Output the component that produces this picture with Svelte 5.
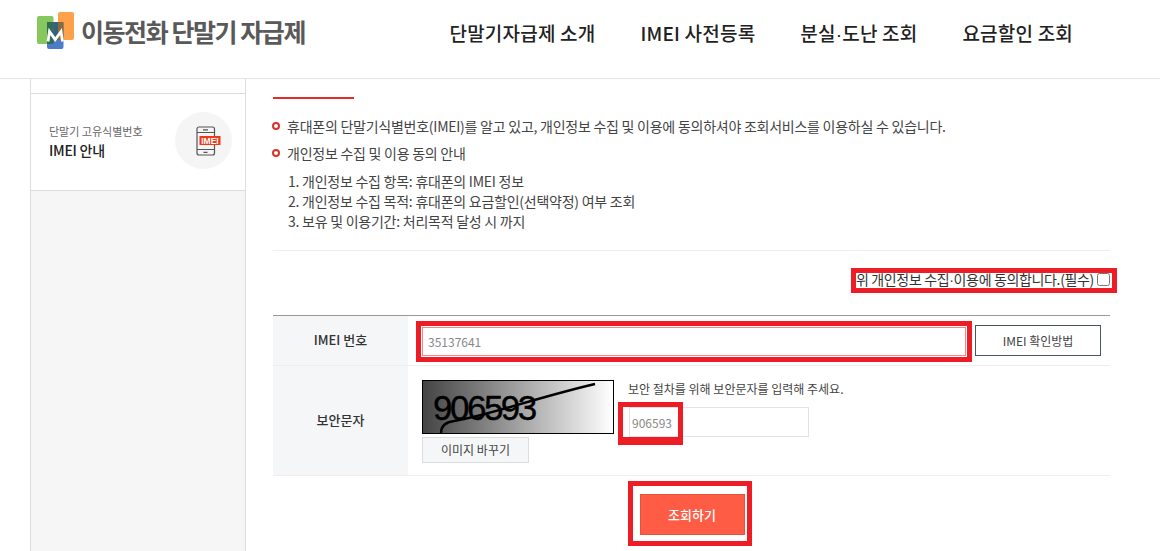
<script>
	const notices = [
		'휴대폰의 단말기식별번호(IMEI)를 알고 있고, 개인정보 수집 및 이용에 동의하셔야 조회서비스를 이용하실 수 있습니다.',
		'개인정보 수집 및 이용 동의 안내'
	];
	const terms = [
		'1. 개인정보 수집 항목: 휴대폰의 IMEI 정보',
		'2. 개인정보 수집 목적: 휴대폰의 요금할인(선택약정) 여부 조회',
		'3. 보유 및 이용기간: 처리목적 달성 시 까지'
	];
</script>

<div class="page">
	<header class="site-header">
		<a class="logo" href="#top">
			<svg class="logo-mark" width="42" height="38" viewBox="0 0 42 38">
				<rect x="1" y="4" width="16.500" height="28" rx="2" fill="#86c85e" />
				<rect x="22" y="0" width="16" height="28" rx="2" fill="#ffa04a" />
				<rect x="11" y="10" width="16.500" height="27" rx="2" fill="#4a7cc8" />
				<path d="M11 10h6.500v22h-6.500z" fill="#2f6e55" />
				<path d="M17.500 10h4.500v18h-4.500z" fill="#3a5f7a" />
				<path d="M22 10h5.500v18h-5.500z" fill="#8a6a3c" />
				<path d="M12 29.500 L13.500 19.500 L19.200 27.500 L25 19.500 L26.500 29.500" fill="none" stroke="#fff" stroke-width="2.800" />
			</svg>
			<span class="logo-text">이동전화 단말기 자급제</span>
		</a>
		<nav class="main-nav">
			<a href="#top">단말기자급제 소개</a>
			<a href="#top">IMEI 사전등록</a>
			<a href="#top">분실<span class="dot">·</span>도난 조회</a>
			<a href="#top">요금할인 조회</a>
		</nav>
	</header>

	<div class="layout">
		<aside class="sidebar">
			<div class="side-top"></div>
			<div class="side-item">
				<div class="side-label">
					<span class="side-sub">단말기 고유식별번호</span>
					<strong>IMEI 안내</strong>
				</div>
				<div class="side-icon">
					<svg width="34" height="30" viewBox="0 0 34 30">
						<rect x="10" y="1" width="17.500" height="28" rx="2" fill="#f5f5f5" stroke="#555" stroke-width="1.200" />
						<path d="M10 6.500h17.500M10 23.500h17.500M16 3.800h5M16.500 26.300h4" stroke="#555" stroke-width="1.200" fill="none" />
						<rect x="12.500" y="10" width="21" height="9" fill="#f03a17" />
						<text x="23" y="17.700" class="imei-tag">IMEI</text>
					</svg>
				</div>
			</div>
		</aside>

		<main class="content">
			<div class="red-rule"></div>

			<ul class="notices">
				{#each notices as notice}
					<li>{notice}</li>
				{/each}
			</ul>

			<ol class="terms">
				{#each terms as term}
					<li>{term}</li>
				{/each}
			</ol>

			<div class="agree-row">
				<label class="agree">
					<span>위 개인정보 수집<span class="dot">·</span>이용에 동의합니다.(필수)</span>
					<input type="checkbox" />
					<i class="mark mark-agree"></i>
				</label>
			</div>

			<div class="form-table">
				<div class="row row-imei">
					<div class="th">IMEI 번호</div>
					<div class="td imei-cell">
						<div class="imei-box">
							<input type="text" value="35137641" />
						</div>
						<button class="outline-btn" type="button">IMEI 확인방법</button>
					</div>
				</div>
				<div class="row row-captcha">
					<div class="th">보안문자</div>
					<div class="td captcha-cell">
						<div class="captcha-left">
							<div class="captcha">
								<span>906593</span>
								<svg width="190" height="52" viewBox="0 0 190 52">
									<path d="M18 52 C18 44 24 41 31 40 C60 36 112 17 172 3" fill="none" stroke="#000" stroke-width="2.400" />
								</svg>
							</div>
							<button class="gray-btn" type="button">이미지 바꾸기</button>
						</div>
						<div class="captcha-right">
							<p>보안 절차를 위해 보안문자를 입력해 주세요.</p>
							<div class="captcha-input">
								<input type="text" value="906593" />
								<i class="mark mark-captcha"></i>
							</div>
						</div>
					</div>
				</div>
			</div>

			<div class="submit-row">
				<div class="submit-box">
					<button class="submit" type="button">조회하기</button>
				</div>
			</div>
		</main>
	</div>
</div>

<style>
	:global(body) {
		margin: 0;
		background: #fff;
	}

	.page {
		height: 551px;
		overflow: hidden;
		font-family: 'Noto Sans CJK KR', 'Noto Sans', sans-serif;
		color: #333;
		font-size: 14px;
		letter-spacing: -0.25px;
	}

	.dot {
		font-family: 'Liberation Sans', sans-serif;
	}

	.site-header {
		height: 78px;
		border-bottom: 1px solid #e5e5e5;
		display: flex;
		justify-content: space-between;
		padding: 0 87px 0 36px;
	}

	.logo {
		display: flex;
		align-items: flex-start;
		gap: 3px;
		padding-top: 12px;
		text-decoration: none;
	}

	.logo-text {
		font-size: 25px;
		font-weight: 700;
		color: #595959;
		letter-spacing: -1.45px;
		line-height: 38px;
	}

	.main-nav {
		display: flex;
		gap: 45px;
		padding-top: 18px;
	}

	.main-nav a {
		font-size: 19px;
		font-weight: 500;
		letter-spacing: 0.2px;
		color: #222;
		text-decoration: none;
		line-height: 30px;
	}

	.layout {
		display: grid;
		grid-template-columns: 216px 1fr;
		margin-left: 30px;
		width: 1080px;
		column-gap: 27px;
		height: 472px;
	}

	.sidebar {
		background: #f6f6f6;
		border-left: 1px solid #ddd;
		border-right: 1px solid #ddd;
	}

	.side-top {
		height: 14px;
		background: #fff;
		border-bottom: 1px solid #ddd;
	}

	.side-item {
		box-sizing: border-box;
		height: 97px;
		background: #fff;
		border-bottom: 1px solid #ddd;
		display: flex;
		align-items: center;
		justify-content: space-between;
		padding: 0 13px 3px 18px;
	}

	.side-label {
		display: flex;
		flex-direction: column;
		padding-top: 3px;
	}

	.side-sub {
		font-size: 11px;
		letter-spacing: 0;
		color: #666;
		line-height: 16px;
	}

	.side-label strong {
		font-size: 14px;
		font-weight: 500;
		color: #222;
		line-height: 22px;
	}

	.side-icon {
		width: 57px;
		height: 57px;
		border-radius: 50%;
		background: #f5f5f5;
		display: flex;
		align-items: center;
		justify-content: center;
	}

	.imei-tag {
		font-family: 'Liberation Sans', sans-serif;
		font-size: 8.500px;
		font-weight: 700;
		letter-spacing: 0;
		fill: #fff;
		text-anchor: middle;
	}

	.content {
		width: 837px;
	}

	.red-rule {
		width: 81px;
		height: 2px;
		background: #e32d2d;
		margin-top: 18px;
	}

	.notices {
		list-style: none;
		margin: 17px 0 0;
		padding: 0;
	}

	.notices li {
		position: relative;
		padding-left: 14px;
		line-height: 20px;
		margin-bottom: 7px;
		color: #444;
	}

	.notices li::before {
		content: '';
		position: absolute;
		left: -1px;
		top: 6px;
		width: 4px;
		height: 4px;
		border: 2px solid #d9342b;
		border-radius: 50%;
	}

	.terms {
		list-style: none;
		margin: 8px 0 0;
		padding: 0 0 19px 15px;
		border-bottom: 1px solid #eee;
	}

	.terms li {
		line-height: 20px;
		color: #444;
	}

	.agree-row {
		display: flex;
		justify-content: flex-end;
		margin-top: 19px;
		height: 18px;
		padding-bottom: 27px;
	}

	.agree {
		position: relative;
		display: flex;
		align-items: center;
		gap: 3px;
		color: #333;
		letter-spacing: -0.35px;
		line-height: 18px;
	}

	.agree input {
		width: 13px;
		height: 13px;
		margin: 0;
	}

	.mark {
		position: absolute;
		border: 5px solid #ee1c25;
		pointer-events: none;
	}

	.mark-agree {
		left: -5px;
		right: -7px;
		top: -2px;
		bottom: -5px;
	}

	.form-table {
		border-top: 1px solid #999;
	}

	.row {
		display: flex;
		border-bottom: 1px solid #eee;
	}

	.row-imei {
		height: 49px;
	}

	.row-captcha {
		height: 109px;
	}

	.th {
		box-sizing: border-box;
		width: 135px;
		padding-bottom: 2px;
		background: #f5f6f8;
		display: flex;
		align-items: center;
		justify-content: center;
		font-size: 13px;
		letter-spacing: 0;
		font-weight: 500;
		color: #333;
	}

	.td {
		flex: 1;
		display: flex;
	}

	.imei-cell {
		align-items: center;
		padding-left: 8px;
		gap: 3px;
	}

	.imei-box {
		box-sizing: border-box;
		width: 556px;
		height: 41px;
		border: 5px solid #ee1c25;
		padding: 1px;
		margin-top: 1px;
	}

	.imei-box input {
		box-sizing: border-box;
		width: 100%;
		height: 100%;
		border: 1px solid #f08a8a;
		padding: 0 5px;
		outline: none;
		font: inherit;
		font-size: 12px;
		letter-spacing: 0;
		color: #888;
	}

	.outline-btn {
		box-sizing: border-box;
		width: 126px;
		height: 31px;
		background: #fff;
		border: 1px solid #4a5560;
		font: inherit;
		font-size: 12px;
		letter-spacing: 0;
		color: #444;
	}

	.captcha-cell {
		padding: 14px 0 0 14px;
		gap: 14px;
	}

	.captcha {
		position: relative;
		box-sizing: border-box;
		width: 192px;
		height: 54px;
		border: 1px solid #000;
		background: linear-gradient(90deg, #444, #fff);
		overflow: hidden;
	}

	.captcha span {
		position: absolute;
		left: 10px;
		top: 5px;
		font-family: 'Liberation Sans', sans-serif;
		font-size: 35px;
		letter-spacing: -2.500px;
		line-height: 44px;
		color: #000;
		-webkit-text-stroke: 0.4px #000;
	}

	.captcha svg {
		position: absolute;
		left: 0;
		top: 0;
	}

	.gray-btn {
		display: block;
		box-sizing: border-box;
		width: 107px;
		height: 26px;
		margin-top: 3px;
		padding-bottom: 2px;
		background: #f5f6f8;
		border: 1px solid #ddd;
		font: inherit;
		font-size: 12px;
		letter-spacing: 0;
		color: #444;
	}

	.captcha-right p {
		margin: -1px 0 0;
		font-size: 12px;
		letter-spacing: 0;
		line-height: 20px;
		color: #444;
	}

	.captcha-input {
		position: relative;
		width: 180px;
		height: 30px;
		margin: 8px 0 0 1px;
	}

	.captcha-input input {
		box-sizing: border-box;
		width: 100%;
		height: 100%;
		border: 1px solid #e3e3e3;
		padding: 0 2px;
		outline: none;
		font: inherit;
		font-size: 12px;
		letter-spacing: 0;
		color: #888;
	}

	.mark-captcha {
		left: -11px;
		top: -5px;
		width: 55px;
		height: 30px;
		border-bottom-width: 8px;
	}

	.submit-row {
		display: flex;
		justify-content: center;
		padding-top: 5px;
		margin-left: -4px;
	}

	.submit-box {
		box-sizing: border-box;
		width: 124px;
		height: 65px;
		border: 5px solid #ee1c25;
		display: flex;
		align-items: center;
		justify-content: flex-start;
		padding: 2px 0 0 7px;
	}

	.submit {
		width: 105px;
		height: 41px;
		box-sizing: border-box;
		background: #ff5c45;
		border: 1px solid #e5533d;
		color: #fff;
		font: inherit;
		font-weight: 500;
		font-size: 13px;
		letter-spacing: 0;
	}
</style>
